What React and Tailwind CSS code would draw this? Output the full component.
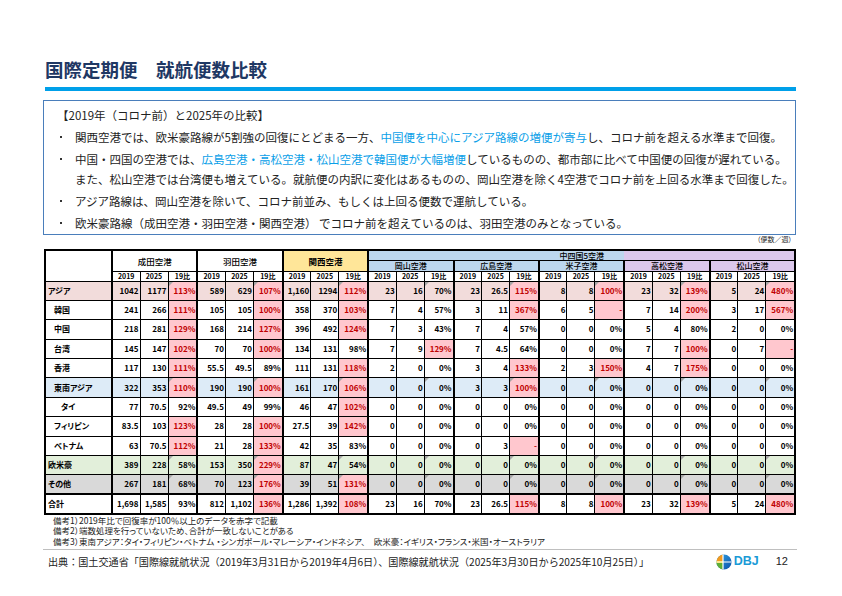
import React from "react"

const airports = ["成田空港", "羽田空港", "関西空港", "岡山空港", "広島空港", "米子空港", "高松空港", "松山空港"]

const z = ["0", "0", "0%"]

const rows = [
	{
		label: "アジア",
		pad: "pl-[2px]",
		bg: "bg-[#f2dcdb]",
		mark: true,
		d: [["1042", "1177", "113%"], ["589", "629", "107%"], ["1,160", "1294", "112%"], ["23", "16", "70%"], ["23", "26.5", "115%"], ["8", "8", "100%"], ["23", "32", "139%"], ["5", "24", "480%"]],
	},
	{
		label: "韓国",
		pad: "pl-[8px]",
		bg: "",
		d: [["241", "266", "111%"], ["105", "105", "100%"], ["358", "370", "103%"], ["7", "4", "57%"], ["3", "11", "367%"], ["6", "5", "-"], ["7", "14", "200%"], ["3", "17", "567%"]],
	},
	{
		label: "中国",
		pad: "pl-[8px]",
		bg: "",
		d: [["218", "281", "129%"], ["168", "214", "127%"], ["396", "492", "124%"], ["7", "3", "43%"], ["7", "4", "57%"], z, ["5", "4", "80%"], ["2", "0", "0%"]],
	},
	{
		label: "台湾",
		pad: "pl-[8px]",
		bg: "",
		d: [["145", "147", "102%"], ["70", "70", "100%"], ["134", "131", "98%"], ["7", "9", "129%"], ["7", "4.5", "64%"], z, ["7", "7", "100%"], ["0", "7", "-"]],
	},
	{
		label: "香港",
		pad: "pl-[8px]",
		bg: "",
		d: [["117", "130", "111%"], ["55.5", "49.5", "89%"], ["111", "131", "118%"], ["2", "0", "0%"], ["3", "4", "133%"], ["2", "3", "150%"], ["4", "7", "175%"], z],
	},
	{
		label: "東南アジア",
		pad: "pl-[8px]",
		bg: "bg-[#ddebf7]",
		mark: true,
		d: [["322", "353", "110%"], ["190", "190", "100%"], ["161", "170", "106%"], z, ["3", "3", "100%"], z, z, z],
	},
	{
		label: "タイ",
		pad: "pl-[15px]",
		bg: "",
		d: [["77", "70.5", "92%"], ["49.5", "49", "99%"], ["46", "47", "102%"], z, z, z, z, z],
	},
	{
		label: "フィリピン",
		pad: "pl-[8px]",
		bg: "",
		d: [["83.5", "103", "123%"], ["28", "28", "100%"], ["27.5", "39", "142%"], z, z, z, z, z],
	},
	{
		label: "ベトナム",
		pad: "pl-[8px]",
		bg: "",
		d: [["63", "70.5", "112%"], ["21", "28", "133%"], ["42", "35", "83%"], z, ["0", "3", "-"], z, z, z],
	},
	{
		label: "欧米豪",
		pad: "pl-[2px]",
		bg: "bg-[#e2efda]",
		mark: true,
		d: [["389", "228", "58%"], ["153", "350", "229%"], ["87", "47", "54%"], z, z, z, z, z],
	},
	{
		label: "その他",
		pad: "pl-[2px]",
		bg: "bg-[#d9d9d9]",
		mark: true,
		d: [["267", "181", "68%"], ["70", "123", "176%"], ["39", "51", "131%"], z, z, z, z, z],
	},
	{
		label: "合計",
		pad: "pl-[2px]",
		bg: "",
		total: true,
		d: [["1,698", "1,585", "93%"], ["812", "1,102", "136%"], ["1,286", "1,392", "108%"], ["23", "16", "70%"], ["23", "26.5", "115%"], ["8", "8", "100%"], ["23", "32", "139%"], ["5", "24", "480%"]],
	},
]

const isRed = (v) => v === "-" || parseInt(v, 10) >= 100

const Bullet = ({ children }) => (
	<div className="flex">
		<span className="w-[18px] h-[20px] flex items-center pl-[3px] shrink-0">
			<span className="w-[2px] h-[2px] bg-[#333]" />
		</span>
		<div className="whitespace-nowrap">{children}</div>
	</div>
)

const Blue = ({ children }) => <span className="text-[#0aa0e8]">{children}</span>

const DbjLogo = () => (
	<div className="flex items-center gap-[2px]">
		<svg width="16" height="16" viewBox="0 0 16 16">
			<defs>
				<linearGradient id="dbjBlue" x1="0" y1="0" x2="1" y2="1">
					<stop offset="0" stopColor="#35a8e6" />
					<stop offset="1" stopColor="#0b4fa8" />
				</linearGradient>
				<clipPath id="dbjClip">
					<circle cx="8" cy="8" r="7.6" />
				</clipPath>
			</defs>
			<g clipPath="url(#dbjClip)">
				<rect x="0" y="0" width="16" height="16" fill="url(#dbjBlue)" />
				<rect x="0" y="0" width="7" height="7" fill="#f29a1f" />
				<rect x="0" y="7" width="7" height="2" fill="#f5d21c" />
				<rect x="0" y="9" width="7" height="7" fill="#5fae36" />
				<rect x="6.4" y="0" width="1.2" height="16" fill="#ffffff" />
				<rect x="0" y="7.4" width="16" height="1.2" fill="#ffffff" opacity="0.85" />
			</g>
		</svg>
		<span className="font-['Liberation_Sans',sans-serif] font-bold text-[12.5px] leading-none text-[#1a9ad6]">
			DBJ
		</span>
	</div>
)

const App = () => {
	return (
		<div className="w-[842px] h-[596px] bg-white overflow-hidden text-[#222] font-['Noto_Sans_CJK_JP',sans-serif]">
			<div className="pl-[43px] pr-[46px]">
				{/* Title */}
				<div className="pt-[57px] pl-[2px] h-[81px]">
					<h1 className="text-[18.5px] leading-[24px] font-bold text-[#1f3864] whitespace-nowrap">
						国際定期便　就航便数比較
					</h1>
				</div>
				<div className="mt-[6px] ml-[2px] h-[3.5px] bg-[#00a0e9]" />

				{/* Summary */}
				<div className="mt-[9px] border border-[#4a7ebb] pl-[13px] pt-[4px] pb-[1px] text-[11.5px] leading-[20px]">
					<div className="whitespace-nowrap">【2019年（コロナ前）と2025年の比較】</div>
					<div className="mt-[2.5px] flex flex-col gap-[2px]">
						<Bullet>
							関西空港では、欧米豪路線が5割強の回復にとどまる一方、
							<Blue>中国便を中心にアジア路線の増便が寄与</Blue>し、コロナ前を超える水準まで回復。
						</Bullet>
						<Bullet>
							中国・四国の空港では、<Blue>広島空港・高松空港・松山空港で韓国便が大幅増便</Blue>
							しているものの、都市部に比べて中国便の回復が遅れている。
							<br />
							また、松山空港では台湾便も増えている。就航便の内訳に変化はあるものの、岡山空港を除く4空港でコロナ前を上回る水準まで回復した。
						</Bullet>
						<Bullet>アジア路線は、岡山空港を除いて、コロナ前並み、もしくは上回る便数で運航している。</Bullet>
						<Bullet>欧米豪路線（成田空港・羽田空港・関西空港） でコロナ前を超えているのは、羽田空港のみとなっている。</Bullet>
					</div>
				</div>

				{/* Unit */}
				<div className="h-[14px] pr-[4px] text-right text-[7px] leading-[9px] [font-feature-settings:'palt']">
					（便数／週）
				</div>

				{/* Table */}
				<table className="ml-[1px] w-[750px] table-fixed border-collapse border-2 border-black text-[8px] leading-none font-semibold text-black [font-feature-settings:'palt']">
					<colgroup>
						<col className="w-[67px]" />
						{airports.map((a) => (
							<React.Fragment key={a}>
								<col className="w-[28px]" />
								<col className="w-[28px]" />
								<col className="w-[29.375px]" />
							</React.Fragment>
						))}
					</colgroup>
					<thead>
						<tr className="h-[10.5px]">
							<td rowSpan={3} className="border border-r-2 border-black" />
							<td rowSpan={2} colSpan={3} className="border border-l-2 border-black text-center text-[8.5px] font-medium">
								成田空港
							</td>
							<td rowSpan={2} colSpan={3} className="border border-l-2 border-black text-center text-[8.5px] font-medium">
								羽田空港
							</td>
							<td rowSpan={2} colSpan={3} className="border border-l-2 border-black bg-[#ffe699] text-center text-[8.5px] font-bold">
								関西空港
							</td>
							<td colSpan={15} className="border border-l-2 border-black text-center text-[8px] leading-[8px] font-medium bg-[linear-gradient(to_right,#bdd7ee_60%,#dcc8ec_60%)]">
								中四国5空港
							</td>
						</tr>
						<tr className="h-[10.5px]">
							{airports.slice(3).map((a, i) => (
								<td
									key={a}
									colSpan={3}
									className={`border border-l-2 border-black text-center text-[8px] leading-[8px] font-medium ${i < 3 ? "bg-[#bdd7ee]" : "bg-[#dcc8ec]"}`}
								>
									{a}
								</td>
							))}
						</tr>
						<tr className="h-[10px]">
							{airports.map((a) => (
								<React.Fragment key={a}>
									<td className="border border-l-2 border-black text-center text-[7px]">2019</td>
									<td className="border border-black text-center text-[7px]">2025</td>
									<td className="border border-black text-center text-[7px]">19比</td>
								</React.Fragment>
							))}
						</tr>
					</thead>
					<tbody>
						{rows.map((r) => (
							<tr key={r.label} className={`h-[19.4px] ${r.bg} ${r.total ? "border-t-2 border-black" : ""}`}>
								<td className={`border border-r-2 border-black text-left ${r.pad} whitespace-nowrap`}>{r.label}</td>
								{r.d.map((g, gi) => (
									<React.Fragment key={gi}>
										<td className="border border-l-2 border-black text-right pr-[1px]">{g[0]}</td>
										<td className="border border-black text-right pr-[1px]">{g[1]}</td>
										<td
											className={`relative border border-black text-right pr-[1px] ${isRed(g[2]) ? "bg-[#ffc7ce] text-[#c00000]" : ""}`}
										>
											{r.mark && (
												<span className="absolute left-0 top-0 w-0 h-0 border-t-[4px] border-r-[4px] border-t-[#a6a6a6] border-r-transparent" />
											)}
											{g[2]}
										</td>
									</React.Fragment>
								))}
							</tr>
						))}
					</tbody>
				</table>

				{/* Notes */}
				<div className="pl-[10px] text-[8.5px] leading-[10.5px] text-[#222] [font-feature-settings:'palt'] whitespace-nowrap">
					<div>備考1）2019年比で回復率が100％以上のデータを赤字で記載</div>
					<div>備考2）端数処理を行っていないため、合計が一致しないことがある</div>
					<div>備考3）東南アジア：タイ・フィリピン・ベトナム ・シンガポール・マレーシア・インドネシア、　欧米豪：イギリス・フランス・米国・オーストラリア</div>
				</div>
			</div>

			{/* Footer */}
			<div className="ml-[43px] mr-[45px] mt-[2.5px] h-px bg-[#bfbfbf]" />
			<div className="ml-[48px] mr-[54px] h-[24px] flex items-center">
				<div className="flex-1 text-[10.1px] whitespace-nowrap text-[#222]">
					出典：国土交通省「国際線就航状況（2019年3月31日から2019年4月6日）、国際線就航状況（2025年3月30日から2025年10月25日）」
				</div>
				<DbjLogo />
				<div className="ml-[17px] text-[11px] text-[#222] font-['Liberation_Sans',sans-serif]">12</div>
			</div>
		</div>
	)
}

export default App
